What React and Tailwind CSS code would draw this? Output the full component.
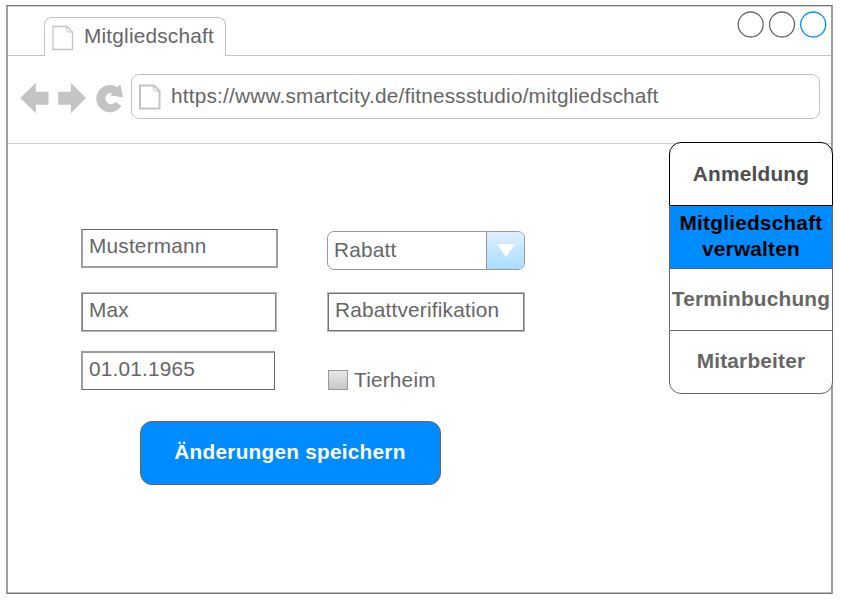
import React from "react";

function PageIcon({ className, strokeWidth }) {
  return (
    <svg className={className} viewBox="0 0 22 26" fill="none" stroke="#c4c4c4" strokeWidth={strokeWidth}>
      <path d="M1 1.500H15L20.500 7V24.500H1Z" />
      <path d="M14.500 2V5Q14.800 7 17 7H20" strokeWidth="1" />
    </svg>
  );
}

function Tab() {
  return (
    <div className="flex h-[39px] w-[182px] rounded-t-lg border border-b-0 border-[#c4c4c4] bg-white pl-[7px] pt-[7px]">
      <PageIcon className="h-[26px] w-[22px] shrink-0" strokeWidth="1.300" />
      <span className="-mt-[2px] ml-[10px] leading-[26px]">Mitgliedschaft</span>
    </div>
  );
}

function WindowButtons() {
  return (
    <svg className="mr-[4px] mt-[4px] h-7 w-[90px]" viewBox="0 0 90 28" fill="none" stroke="#666" strokeWidth="1.3">
      <circle cx="13.700" cy="13.500" r="12.500" />
      <circle cx="45" cy="13.500" r="12.500" />
      <circle cx="76.200" cy="13.500" r="12.500" stroke="#008cff" />
    </svg>
  );
}

function NavIcons() {
  return (
    <svg className="h-[32px] w-[104px] shrink-0" viewBox="20 82 104 32" fill="#c4c4c4">
      <path d="M20.300 98L35.800 82.800V91.800H48.500V104.700H35.800V113.300Z" />
      <path d="M86 98L70.900 82.800V91.800H58.200V104.700H70.900V113.300Z" />
      <path d="M120.300 84.300L123.200 97.500L109.700 95.200L112.800 93.300A5.600 5.600 0 1 0 115.600 101.700L121.300 106A13.600 13.600 0 1 1 117.500 87.300Z" />
    </svg>
  );
}

export default function App() {
  return (
    <div className="h-[602px] w-[841px] overflow-hidden bg-white pl-[6px] pt-[5px] font-['Liberation_Sans',Arial,sans-serif] text-[20.8px] tracking-[0.2px] text-[#666]">
      <div className="flex h-[589px] w-[827px] flex-col whitespace-nowrap border-x-2 border-y border-[#9e9e9e] border-b-[#777] border-t-[#737373] pb-px pt-px shadow-[inset_0_1px_0_#d4d4d4,inset_0_-1px_0_#bcbcbc]">
        <header className="flex h-[49px] shrink-0">
          <div className="w-9 border-b border-[#c4c4c4]" />
          <div className="pt-[10px]">
            <Tab />
          </div>
          <div className="flex flex-1 justify-end border-b border-[#c4c4c4]">
            <WindowButtons />
          </div>
        </header>

        <div className="flex h-[88px] shrink-0 border-b border-[#d0d0d0] pl-[12px] pt-[18px]">
          <div className="pt-[8px]">
            <NavIcons />
          </div>
          <div className="ml-[7px] flex h-[45px] w-[689px] rounded-lg border border-[#c4c4c4] pl-[7px] pt-[8px]">
            <PageIcon className="mt-px h-[26px] w-[22px] shrink-0" strokeWidth="2" />
            <span className="ml-[10px] leading-[26px]">
              https://www.smartcity.de/fitnessstudio/mitgliedschaft
            </span>
          </div>
        </div>

        <main className="flex flex-1">
          <form className="w-[661px] pl-[73px] pt-[85px] leading-[26px]">
            <div className="flex">
              <div className="w-[246px]">
                <div className="h-[39px] w-[197px] border-2 border-t border-[#9e9e9e] border-t-[#666] pl-[6px] pt-[3px]">
                  Mustermann
                </div>
                <div className="mt-[24px] h-[40px] w-[196px] border border-[#b8b8b8] border-l-[#9e9e9e] pl-[7px] pt-[4px] shadow-[inset_0_0_0_1px_#858585]">
                  Max
                </div>
                <div className="mt-[19px] h-[39px] w-[194px] border-b border-l-2 border-r border-t-2 border-[#9e9e9e] border-b-[#666] border-r-[#666] pl-[6px] pt-[3px]">
                  01.01.1965
                </div>
              </div>
              <div className="w-[198px]">
                <div className="mt-[2px] flex h-[39px] w-[198px] overflow-hidden rounded-[7px] border border-[#999]">
                  <span className="w-[158px] pl-[6px] pt-[5px]">Rabatt</span>
                  <div className="flex flex-1 justify-center border-l border-[#999] bg-linear-to-b from-[#e0f0ff] to-[#a8dbff]">
                    <svg className="mt-[12px] h-[13px] w-[18px]" viewBox="0 0 18 13" fill="#fff">
                      <path d="M0 0H18L9 13Z" />
                    </svg>
                  </div>
                </div>
                <div className="mt-[22px] h-[40px] w-[198px] border border-[#b8b8b8] pl-[7px] pt-[4px] shadow-[inset_0_0_0_1px_#777]">
                  Rabattverifikation
                </div>
                <div className="mt-[35px] flex items-center">
                  <span className="ml-px h-[20px] w-[20px] border border-[#999] bg-linear-to-b from-[#e8e8e8] to-[#c8c8c8]" />
                  <span className="ml-[6px]">Tierheim</span>
                </div>
              </div>
            </div>
            <button
              type="button"
              className="ml-[59px] mt-[28px] flex h-[64px] w-[301px] justify-center rounded-xl border border-[#666] bg-[#008cff] pr-px pt-[17px] font-bold tracking-[0.24px] text-white"
            >
              Änderungen speichern
            </button>
          </form>

          <nav className="-mr-[2px] -mt-[2px] h-[252px] w-[164px] shrink-0 text-center font-bold leading-[26px] tracking-[0.22px]">
            <div className="h-[64px] rounded-t-xl border border-black bg-white pt-[18px] text-[#4d4d4d]">Anmeldung</div>
            <div className="h-[62px] border-x border-[#666] bg-[#008cff] pt-[4px] text-black">
              Mitgliedschaft
              <br />
              verwalten
            </div>
            <div className="flex h-[62px] justify-center border-x border-t border-[#666] bg-white pt-[17px]">
              Terminbuchung
            </div>
            <div className="h-[64px] rounded-b-xl border border-[#666] bg-white pt-[17px]">Mitarbeiter</div>
          </nav>
        </main>
      </div>
    </div>
  );
}
